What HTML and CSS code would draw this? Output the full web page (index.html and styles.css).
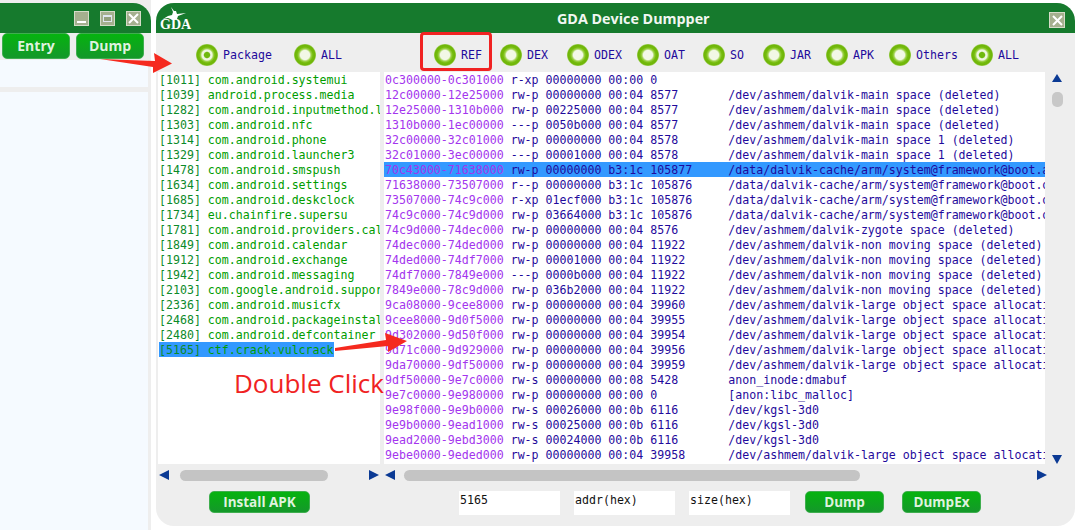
FILE: index.html
```html
<!DOCTYPE html>
<html lang="en">
<head>
    <meta charset="UTF-8">
    <title>GDA Device Dumpper</title>
    <link rel="stylesheet" href="styles.css">
</head>
<body>
    <div class="side">
        <div class="side-title">
            <span class="win-btn"><i class="glyph-min"></i></span>
            <span class="win-btn"><i class="glyph-max"></i></span>
            <span class="win-btn"><svg viewBox="0 0 15 15"><path d="M3 3l9 9M12 3l-9 9"/></svg></span>
        </div>
        <div class="side-tools">
            <button class="btn btn-side">Entry</button>
            <button class="btn btn-side">Dump</button>
        </div>
        <div class="side-top"></div>
        <div class="side-list"></div>
    </div>

    <div class="main">
        <div class="title-bar">
            <div class="logo">
                <svg viewBox="0 0 28 14" width="28" height="14"><path d="M11 0l3 4 2 0 1 3 9-1-8 3-1 3-4 1-5-2-5 1 5-3 4-1 1-3z"/></svg>
                <span>GDA</span>
            </div>
            <div class="title">GDA Device Dumpper</div>
            <span class="win-btn win-close"><svg viewBox="0 0 15 15"><path d="M3 3l9 9M12 3l-9 9"/></svg></span>
        </div>

        <div class="options">
            <label class="opt"><i class="radio on"></i>Package</label>
            <label class="opt"><i class="radio"></i>ALL</label>
            <label class="opt"><i class="radio"></i>REF</label>
            <label class="opt"><i class="radio"></i>DEX</label>
            <label class="opt"><i class="radio"></i>ODEX</label>
            <label class="opt"><i class="radio"></i>OAT</label>
            <label class="opt"><i class="radio"></i>SO</label>
            <label class="opt"><i class="radio"></i>JAR</label>
            <label class="opt"><i class="radio"></i>APK</label>
            <label class="opt"><i class="radio"></i>Others</label>
            <label class="opt"><i class="radio on"></i>ALL</label>
        </div>

        <div class="lists">
            <div class="list procs">
                <div class="row"><b>[1011]</b> com.android.systemui</div>
                <div class="row"><b>[1039]</b> android.process.media</div>
                <div class="row"><b>[1282]</b> com.android.inputmethod.latin</div>
                <div class="row"><b>[1303]</b> com.android.nfc</div>
                <div class="row"><b>[1314]</b> com.android.phone</div>
                <div class="row"><b>[1329]</b> com.android.launcher3</div>
                <div class="row"><b>[1478]</b> com.android.smspush</div>
                <div class="row"><b>[1634]</b> com.android.settings</div>
                <div class="row"><b>[1685]</b> com.android.deskclock</div>
                <div class="row"><b>[1734]</b> eu.chainfire.supersu</div>
                <div class="row"><b>[1781]</b> com.android.providers.calendar</div>
                <div class="row"><b>[1849]</b> com.android.calendar</div>
                <div class="row"><b>[1912]</b> com.android.exchange</div>
                <div class="row"><b>[1942]</b> com.android.messaging</div>
                <div class="row"><b>[2103]</b> com.google.android.support</div>
                <div class="row"><b>[2336]</b> com.android.musicfx</div>
                <div class="row"><b>[2468]</b> com.android.packageinstaller</div>
                <div class="row"><b>[2480]</b> com.android.defcontainer</div>
                <div class="row"><span class="picked"><b>[5165]</b> ctf.crack.vulcrack</span></div>
            </div>
            <div class="list maps">
                <div class="row"><em>0c300000-0c301000</em> r-xp 00000000 00:00 <u>0</u></div>
                <div class="row"><em>12c00000-12e25000</em> rw-p 00000000 00:04 <u>8577</u>/dev/ashmem/dalvik-main space (deleted)</div>
                <div class="row"><em>12e25000-1310b000</em> rw-p 00225000 00:04 <u>8577</u>/dev/ashmem/dalvik-main space (deleted)</div>
                <div class="row"><em>1310b000-1ec00000</em> ---p 0050b000 00:04 <u>8577</u>/dev/ashmem/dalvik-main space (deleted)</div>
                <div class="row"><em>32c00000-32c01000</em> rw-p 00000000 00:04 <u>8578</u>/dev/ashmem/dalvik-main space 1 (deleted)</div>
                <div class="row"><em>32c01000-3ec00000</em> ---p 00001000 00:04 <u>8578</u>/dev/ashmem/dalvik-main space 1 (deleted)</div>
                <div class="row picked"><em>70c43000-71638000</em> rw-p 00000000 b3:1c <u>105877</u>/data/dalvik-cache/arm/system@framework@boot.art</div>
                <div class="row"><em>71638000-73507000</em> r--p 00000000 b3:1c <u>105876</u>/data/dalvik-cache/arm/system@framework@boot.oat</div>
                <div class="row"><em>73507000-74c9c000</em> r-xp 01ecf000 b3:1c <u>105876</u>/data/dalvik-cache/arm/system@framework@boot.oat</div>
                <div class="row"><em>74c9c000-74c9d000</em> rw-p 03664000 b3:1c <u>105876</u>/data/dalvik-cache/arm/system@framework@boot.oat</div>
                <div class="row"><em>74c9d000-74dec000</em> rw-p 00000000 00:04 <u>8576</u>/dev/ashmem/dalvik-zygote space (deleted)</div>
                <div class="row"><em>74dec000-74ded000</em> rw-p 00000000 00:04 <u>11922</u>/dev/ashmem/dalvik-non moving space (deleted)</div>
                <div class="row"><em>74ded000-74df7000</em> rw-p 00001000 00:04 <u>11922</u>/dev/ashmem/dalvik-non moving space (deleted)</div>
                <div class="row"><em>74df7000-7849e000</em> ---p 0000b000 00:04 <u>11922</u>/dev/ashmem/dalvik-non moving space (deleted)</div>
                <div class="row"><em>7849e000-78c9d000</em> rw-p 036b2000 00:04 <u>11922</u>/dev/ashmem/dalvik-non moving space (deleted)</div>
                <div class="row"><em>9ca08000-9cee8000</em> rw-p 00000000 00:04 <u>39960</u>/dev/ashmem/dalvik-large object space allocation</div>
                <div class="row"><em>9cee8000-9d0f5000</em> rw-p 00000000 00:04 <u>39955</u>/dev/ashmem/dalvik-large object space allocation</div>
                <div class="row"><em>9d302000-9d50f000</em> rw-p 00000000 00:04 <u>39954</u>/dev/ashmem/dalvik-large object space allocation</div>
                <div class="row"><em>9d71c000-9d929000</em> rw-p 00000000 00:04 <u>39956</u>/dev/ashmem/dalvik-large object space allocation</div>
                <div class="row"><em>9da70000-9df50000</em> rw-p 00000000 00:04 <u>39959</u>/dev/ashmem/dalvik-large object space allocation</div>
                <div class="row"><em>9df50000-9e7c0000</em> rw-s 00000000 00:08 <u>5428</u>anon_inode:dmabuf</div>
                <div class="row"><em>9e7c0000-9e980000</em> rw-p 00000000 00:00 <u>0</u>[anon:libc_malloc]</div>
                <div class="row"><em>9e98f000-9e9b0000</em> rw-s 00026000 00:0b <u>6116</u>/dev/kgsl-3d0</div>
                <div class="row"><em>9e9b0000-9ead1000</em> rw-s 00025000 00:0b <u>6116</u>/dev/kgsl-3d0</div>
                <div class="row"><em>9ead2000-9ebd3000</em> rw-s 00024000 00:0b <u>6116</u>/dev/kgsl-3d0</div>
                <div class="row"><em>9ebe0000-9eded000</em> rw-p 00000000 00:04 <u>39958</u>/dev/ashmem/dalvik-large object space allocation</div>
            </div>
            <div class="vscroll">
                <i class="tri tri-up"></i>
                <i class="vthumb"></i>
                <i class="tri tri-down"></i>
            </div>
        </div>

        <div class="hscrolls">
            <div class="hscroll hscroll-procs">
                <i class="tri tri-left"></i>
                <i class="hthumb thumb-procs"></i>
                <i class="tri tri-right"></i>
            </div>
            <div class="hscroll hscroll-maps">
                <i class="tri tri-left"></i>
                <i class="hthumb thumb-maps"></i>
                <i class="tri tri-right"></i>
            </div>
        </div>

        <div class="footer">
            <button class="btn btn-install">Install APK</button>
            <div class="field field-pid">5165</div>
            <div class="field">addr(hex)</div>
            <div class="field">size(hex)</div>
            <button class="btn btn-dump">Dump</button>
            <button class="btn btn-dump">DumpEx</button>
        </div>
    </div>

    <!-- annotations drawn on top of the screenshot -->
    <div class="ref-box"></div>
    <div class="note">Double Click</div>
    <svg class="arrows" width="1080" height="530">
        <polygon points="100,59 155,61 154,53 172,63.5 153,73 153,67"/>
        <polygon points="335,348 386,340 385,333 407,341 388,352 388,346 335,351"/>
    </svg>
</body>
</html>
```

FILE: styles.css
```css
body {
    margin: 0;
    width: 1080px;
    height: 530px;
    overflow: hidden;
    position: relative;
    display: flex;
    align-items: flex-start;
    background-color: white;
    font-family: "DejaVu Sans Mono", monospace;
    font-size: 11.6px;
}

/* left window */
.side {
    width: 151px;
    height: 530px;
    margin-right: 5px;
    display: flex;
    flex-direction: column;
    background-color: #eeeeee;
}

.side-title {
    height: 30px;
    margin-top: 3px;
    padding: 8px 10px 0 0;
    box-sizing: border-box;
    display: flex;
    justify-content: flex-end;
    gap: 11px;
    background-color: #167a2d;
    border-top-right-radius: 18px;
}

.win-btn {
    width: 15px;
    height: 15px;
    box-sizing: border-box;
    display: flex;
    align-items: center;
    justify-content: center;
    background-color: #a5b08f;
    border: 1px solid #d5dcc8;
}

.win-btn svg {
    width: 15px;
    height: 15px;
    flex: none;
}

.win-btn path {
    stroke: white;
    stroke-width: 2;
    fill: none;
}

.glyph-min {
    width: 9px;
    height: 2px;
    margin-top: 7px;
    background-color: white;
}

.glyph-max {
    width: 9px;
    height: 7px;
    border: 1px solid #dfe6ef;
    border-top-width: 2px;
    background-color: #93a07c;
    box-sizing: border-box;
}

.side-tools {
    height: 27px;
    padding-left: 2px;
    display: flex;
    gap: 6px;
}

.btn {
    padding: 0 0 1px;
    border: 1px solid #3fae4f;
    border-radius: 5px;
    background: linear-gradient(#06b30f, #14982a);
    color: #dff2df;
    font-family: "Open Sans", sans-serif;
    font-size: 14px;
    font-weight: 700;
    cursor: pointer;
}

.btn-side {
    width: 68px;
    height: 26px;
}

.side-top {
    width: 148px;
    height: 27px;
    margin-bottom: 5px;
    background-color: #f5faff;
}

.side-list {
    width: 148px;
    flex: 1;
    background-color: #f5faff;
}

/* main window */
.main {
    width: 919px;
    height: 523px;
    margin-top: 3px;
    display: flex;
    flex-direction: column;
    background-color: #eeeeee;
    border-radius: 18px;
    overflow: hidden;
}

.title-bar {
    height: 30px;
    flex: none;
    position: relative;
    display: flex;
    align-items: center;
    background-color: #167a2d;
}

.logo {
    width: 28px;
    margin-left: 4px;
    color: white;
    text-align: center;
    line-height: 11px;
}

.logo svg {
    display: block;
    height: 14px;
}

.logo path {
    fill: white;
}

.logo span {
    display: block;
    margin-top: -2px;
    font-family: "Liberation Serif", serif;
    font-size: 14px;
    font-weight: 700;
}

.title {
    margin-left: 369px;
    color: #f2f7f2;
    font-family: "Open Sans", sans-serif;
    font-size: 14.3px;
    font-weight: 700;
    white-space: nowrap;
}

.win-close {
    position: absolute;
    top: 9px;
    right: 10px;
    width: 16px;
    height: 16px;
}

.options {
    height: 39px;
    flex: none;
    padding: 4px 0 0 40px;
    box-sizing: border-box;
    display: grid;
    grid-template-columns: 98px 140px 66px 67px 70px 66px 60px 63px 63px 82px auto;
    align-items: center;
    color: #1f0a9c;
}

.opt {
    display: flex;
    align-items: center;
    gap: 5px;
}

.radio {
    width: 22px;
    height: 22px;
    border-radius: 50%;
    background: radial-gradient(closest-side, #f2f8e6 0 42%, #9ed24a 56%, #74bb0c 72%, #6fb508 90%, #9fd05a 100%);
}

.radio.on {
    background: radial-gradient(closest-side, #6fb90e 0 24%, #eef6e0 34% 46%, #9ed24a 58%, #74bb0c 72%, #6fb508 90%, #9fd05a 100%);
}

.lists {
    height: 392px;
    flex: none;
    display: flex;
    padding-left: 2px;
}

.list {
    height: 392px;
    overflow: hidden;
    background-color: white;
}

.row {
    height: 15px;
    line-height: 17px;
    white-space: pre;
    overflow: hidden;
}

.procs {
    width: 221px;
    padding-left: 1px;
    margin-right: 4px;
    color: #009c00;
}

.procs b {
    font-weight: 400;
    color: #0c8a2a;
}

.maps {
    width: 660px;
    padding-left: 1px;
    color: #1f0a9c;
}

.maps em {
    font-style: normal;
    color: #a335ee;
}

.maps u {
    display: inline-block;
    width: 78px;
    text-decoration: none;
}

.picked {
    display: inline-block;
    height: 15px;
    background-color: #3399ff;
}

.maps .picked {
    display: block;
    margin-left: -1px;
    padding-left: 1px;
}

.vscroll {
    width: 30px;
    height: 392px;
    padding: 2px 0 0 7px;
    box-sizing: border-box;
    position: relative;
}

.vthumb {
    display: block;
    width: 11px;
    height: 15px;
    margin-top: 10px;
    border-radius: 5px;
    background-color: #c8c8c8;
}

.tri {
    display: block;
    width: 0;
    height: 0;
    flex: none;
    border-style: solid;
    border-color: transparent;
}

.tri-up {
    border-width: 0 5px 8px;
    border-bottom-color: #0b3a94;
}

.tri-down {
    position: absolute;
    left: 7px;
    bottom: 0;
    border-width: 9px 5px 0;
    border-top-color: #0b3a94;
}

.tri-left {
    border-width: 5px 10px 5px 0;
    border-right-color: #0b3a94;
}

.tri-right {
    border-width: 5px 0 5px 10px;
    border-left-color: #0b3a94;
}

.hscrolls {
    height: 22px;
    flex: none;
    display: flex;
    align-items: center;
}

.hscroll {
    display: flex;
    align-items: center;
}

.hscroll-procs {
    width: 220px;
    margin: 0 6px 0 3px;
}

.hscroll-maps {
    width: 662px;
}

.hthumb {
    display: block;
    height: 11px;
    border-radius: 6px;
    background-color: #c4c4c4;
}

.thumb-procs {
    width: 148px;
    margin: 0 41px 0 11px;
}

.thumb-maps {
    width: 456px;
    margin: 0 177px 0 9px;
}

.footer {
    padding: 5px 0 0 53px;
    display: flex;
    align-items: flex-start;
}

.btn-install {
    width: 101px;
    height: 22px;
    margin-right: 149px;
    font-size: 13.5px;
}

.field {
    width: 101px;
    height: 24px;
    margin-right: 14px;
    padding-left: 1px;
    box-sizing: border-box;
    background-color: white;
    color: #111111;
    line-height: 19px;
}

.btn-dump {
    width: 79px;
    height: 22px;
    margin: 0 17px 0 1px;
    font-size: 13.5px;
}

/* annotations */
.ref-box {
    position: absolute;
    left: 420px;
    top: 32px;
    width: 66px;
    height: 33px;
    border: 3px solid #f02222;
    border-radius: 4px;
}

.note {
    position: absolute;
    left: 234px;
    top: 365px;
    color: #f02222;
    font-family: "Open Sans", sans-serif;
    font-size: 26px;
    line-height: 36px;
    white-space: nowrap;
}

.arrows {
    position: absolute;
    left: 0;
    top: 0;
    pointer-events: none;
}

.arrows polygon {
    fill: #f52a1f;
}
```
